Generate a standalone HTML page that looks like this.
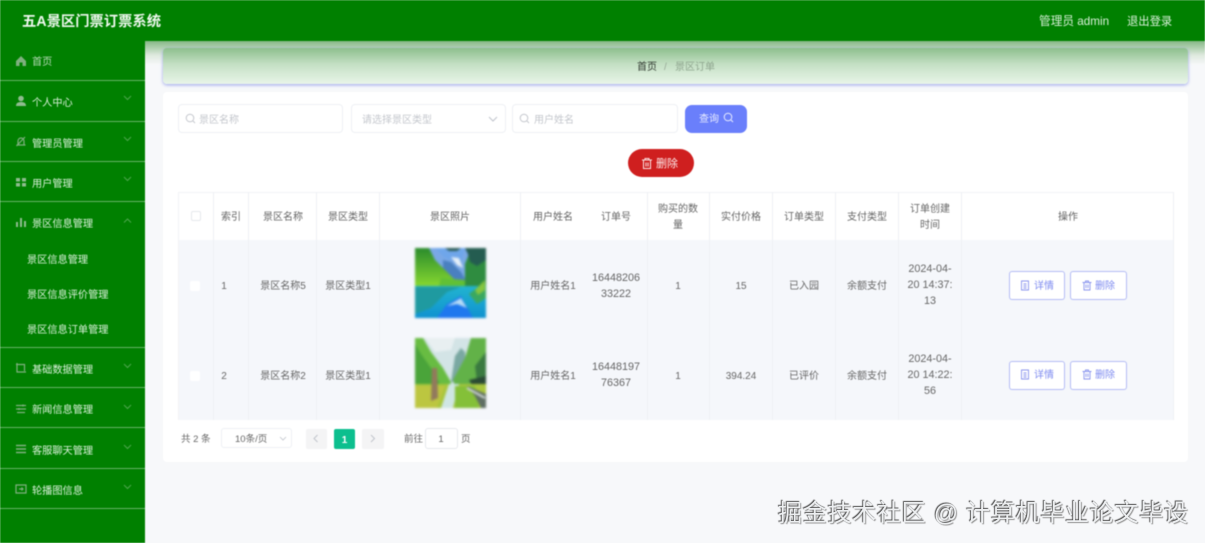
<!DOCTYPE html>
<html lang="zh"><head><meta charset="utf-8"><title>五A景区门票订票系统</title>
<style>
*{box-sizing:border-box;margin:0;padding:0}
html,body{width:1205px;height:543px;overflow:hidden;background:#f7f8fa}
body{font-family:"Liberation Sans","Noto Sans CJK SC",sans-serif;position:relative}
#w{position:absolute;left:0;top:0;width:1205px;height:543px;filter:blur(.45px);overflow:hidden}
.a{position:absolute}
.t{position:absolute;white-space:nowrap;transform:translate(-50%,-50%);text-align:center;font-size:10px;color:#666;line-height:16px;margin-top:6px}
.l{transform:translate(0,-50%);text-align:left}
.n{font-size:10.8px}
.s{color:#d8f0d8;font-size:10.2px}
.ln{position:absolute;left:0;width:145px;height:1px;background:#66b366}
.v{position:absolute;top:192px;height:228px;width:1px;background:#eef0f4}
.ic{position:absolute;fill:none;stroke:#7fb07f;stroke-width:1.2}
.cv{position:absolute;left:123px;fill:none;stroke:#4da64d;stroke-width:1}
.in{position:absolute;background:#fff;border:1px solid #eef0f4;border-radius:4px;height:29px;top:104px}
.ph{color:#c4c7cd;font-size:10px}
.b{position:absolute;width:56px;height:29px;background:#fff;border:1px solid #b4bcf5;border-radius:3px}
</style></head><body><div id="w">
<div class="a" style="left:0;top:0;width:1205px;height:41px;background:#008000"></div>
<div class="a" style="left:0;top:41px;width:145px;height:502px;background:#008000"></div>
<div class="a" style="left:145px;top:41px;width:1060px;height:24px;background:linear-gradient(#86b886,#dfeadf 60%,#f7f8fa)"></div>
<div class="t l" style="left:22px;top:16px;font-size:14.3px;font-weight:700;color:#eef8ee">五A景区门票订票系统</div>
<div class="t l" style="left:1039px;top:16px;font-size:11.7px;color:#d8f0d8">管理员 admin</div>
<div class="t l" style="left:1127px;top:16px;font-size:11.3px;color:#d8f0d8">退出登录</div>

<!-- sidebar -->
<div class="ln" style="top:80px"></div><div class="ln" style="top:121px"></div><div class="ln" style="top:161px"></div><div class="ln" style="top:201px"></div><div class="ln" style="top:347px"></div><div class="ln" style="top:387px"></div><div class="ln" style="top:427px"></div><div class="ln" style="top:468px"></div><div class="ln" style="top:508px"></div>
<div class="t l s" style="left:32px;top:57px;color:#b5d9b5">首页</div>
<div class="t l s" style="left:32px;top:98px">个人中心</div>
<div class="t l s" style="left:32px;top:139px">管理员管理</div>
<div class="t l s" style="left:32px;top:179px">用户管理</div>
<div class="t l s" style="left:32px;top:219px">景区信息管理</div>
<div class="t l s" style="left:27px;top:255px">景区信息管理</div>
<div class="t l s" style="left:27px;top:290px">景区信息评价管理</div>
<div class="t l s" style="left:27px;top:325px">景区信息订单管理</div>
<div class="t l s" style="left:32px;top:365px">基础数据管理</div>
<div class="t l s" style="left:32px;top:405px">新闻信息管理</div>
<div class="t l s" style="left:32px;top:446px">客服聊天管理</div>
<div class="t l s" style="left:32px;top:486px">轮播图信息</div>
<svg class="ic" style="left:15px;top:55px;fill:#7fb07f;stroke:none" width="12" height="12" viewBox="0 0 12 12"><path d="M6 1 1 6v5h3.500V7.500h3V11H11V6z"/></svg>
<svg class="ic" style="left:15px;top:95px;fill:#8fbc8f;stroke:none" width="12" height="12" viewBox="0 0 12 12"><circle cx="6" cy="3.500" r="2.800"/><path d="M1 11c0-3 2-4 5-4s5 1 5 4z"/></svg>
<svg class="ic" style="left:15px;top:135px" width="12" height="12" viewBox="0 0 12 12"><path d="M1.500 10h9M3 10V6a3 3 0 0 1 6 0v4M1.500 11 10 2"/></svg>
<svg class="ic" style="left:15px;top:176px;fill:#8fbc8f;stroke:none" width="12" height="12" viewBox="0 0 12 12"><path d="M1 2h4v3.500H1zM7 2h4v3.500H7zM1 7h4v3.500H1zM7 7h4v3.500H7z"/></svg>
<svg class="ic" style="left:15px;top:216px;fill:#8fbc8f;stroke:none" width="12" height="12" viewBox="0 0 12 12"><path d="M1 6h2v5H1zM5 2h2v9H5zM9 5h2v6H9z"/></svg>
<svg class="ic" style="left:15px;top:362px" width="12" height="12" viewBox="0 0 12 12"><path d="M2 1v9h9M1 2.500h8.500V9"/></svg>
<svg class="ic" style="left:15px;top:403px" width="12" height="12" viewBox="0 0 12 12"><path d="M1 2.500h10M1 6h10M2 9.500h8M8 1.500v2M4 5v2"/></svg>
<svg class="ic" style="left:15px;top:443px;stroke-width:1.400" width="12" height="12" viewBox="0 0 12 12"><path d="M1 2.500h10M1 6h10M1 9.500h10"/></svg>
<svg class="ic" style="left:15px;top:483px" width="12" height="12" viewBox="0 0 12 12"><path d="M1 2h10v8H1zM4 6h4M6.500 4.500 8 6 6.500 7.500"/></svg>
<svg class="cv" style="top:95px" width="9" height="6" viewBox="0 0 9 6"><path d="m1 1 3.500 3.500L8 1"/></svg>
<svg class="cv" style="top:136px" width="9" height="6" viewBox="0 0 9 6"><path d="m1 1 3.500 3.500L8 1"/></svg>
<svg class="cv" style="top:176px" width="9" height="6" viewBox="0 0 9 6"><path d="m1 1 3.500 3.500L8 1"/></svg>
<svg class="cv" style="top:218px" width="9" height="6" viewBox="0 0 9 6"><path d="m1 4.500L4.500 1 8 4.500"/></svg>
<svg class="cv" style="top:363px" width="9" height="6" viewBox="0 0 9 6"><path d="m1 1 3.500 3.500L8 1"/></svg>
<svg class="cv" style="top:404px" width="9" height="6" viewBox="0 0 9 6"><path d="m1 1 3.500 3.500L8 1"/></svg>
<svg class="cv" style="top:444px" width="9" height="6" viewBox="0 0 9 6"><path d="m1 1 3.500 3.500L8 1"/></svg>
<svg class="cv" style="top:484px" width="9" height="6" viewBox="0 0 9 6"><path d="m1 1 3.500 3.500L8 1"/></svg>

<!-- breadcrumb -->
<div class="a" style="left:163px;top:48px;width:1025px;height:36px;border-radius:4px;background:linear-gradient(#8dbf8d,#c4e0c4 45%,#e9f5e9);box-shadow:0 1px 3px #98a1ea"></div>
<div class="t l" style="left:637px;top:60px;color:#303830;font-size:10px;margin-top:8px">首页</div>
<div class="t l" style="left:664px;top:60px;color:#98aa98;font-size:10px;margin-top:8px">/</div>
<div class="t l" style="left:675px;top:60px;color:#8fa68f;font-size:10px;margin-top:8px">景区订单</div>

<!-- card -->
<div class="a" style="left:163px;top:92px;width:1025px;height:370px;background:#fff;border-radius:4px"></div>

<!-- search -->
<div class="in" style="left:178px;width:165px"></div>
<div class="in" style="left:351px;width:155px"></div>
<div class="in" style="left:512px;width:166px"></div>
<svg class="a" style="left:185px;top:113px;fill:none;stroke:#c4c7cd;stroke-width:1" width="11" height="11" viewBox="0 0 11 11"><circle cx="5" cy="5" r="3.800"/><path d="m8 8 2 2"/></svg>
<svg class="a" style="left:519px;top:113px;fill:none;stroke:#c4c7cd;stroke-width:1" width="11" height="11" viewBox="0 0 11 11"><circle cx="5" cy="5" r="3.800"/><path d="m8 8 2 2"/></svg>
<div class="t l ph" style="left:199px;top:115px">景区名称</div>
<div class="t l ph" style="left:362px;top:115px">请选择景区类型</div>
<div class="t l ph" style="left:534px;top:115px">用户姓名</div>
<svg class="a" style="left:488px;top:116px;fill:none;stroke:#c0c4cc;stroke-width:1" width="10" height="6" viewBox="0 0 10 6"><path d="m1 1 4 4 4-4"/></svg>
<div class="a" style="left:685px;top:105px;width:62px;height:28px;background:#6a7ffb;border-radius:7px"></div>
<div class="t l" style="left:699px;top:114px;color:#e8ecff;font-size:10px">查询</div>
<svg class="a" style="left:723px;top:112px;fill:none;stroke:#e8ecff;stroke-width:1" width="11" height="11" viewBox="0 0 11 11"><circle cx="5" cy="5" r="3.800"/><path d="m8 8 2 2"/></svg>

<div class="a" style="left:628px;top:149px;width:66px;height:28px;background:#cf1f1f;border-radius:14px"></div>
<svg class="a" style="left:641px;top:157px;fill:none;stroke:#fbe4e4;stroke-width:1" width="12" height="13" viewBox="0 0 12 13"><path d="M1 3h10M4 3V1.500h4V3M2.500 3v8.500h7V3M5 5.500v4M7 5.500v4"/></svg>
<div class="t l" style="left:656px;top:158px;color:#fdeaea;font-size:11px">删除</div>

<!-- table -->
<div class="a" style="left:178px;top:192px;width:996px;height:228px;background:#f5f7fb;border-top:1px solid #f2f3f6;border-right:1px solid #eef0f4;border-left:1px solid #f2f3f6"></div>
<div class="a" style="left:179px;top:193px;width:994px;height:47px;background:#fff"></div>
<div class="v" style="left:213px"></div><div class="v" style="left:248px"></div><div class="v" style="left:316px"></div><div class="v" style="left:379px"></div><div class="v" style="left:520px"></div><div class="v" style="left:647px"></div><div class="v" style="left:709px"></div><div class="v" style="left:772px"></div><div class="v" style="left:835px"></div><div class="v" style="left:898px"></div><div class="v" style="left:961px"></div>
<div class="a" style="left:191px;top:211px;width:10px;height:10px;background:#fff;border:1px solid #e6e8ec;border-radius:2px"></div>
<div class="a" style="left:190px;top:281px;width:10px;height:10px;background:#fff;border-radius:2px"></div>
<div class="a" style="left:190px;top:371px;width:10px;height:10px;background:#fff;border-radius:2px"></div>

<div class="t" style="left:231px;top:212px">索引</div>
<div class="t" style="left:283px;top:212px">景区名称</div>
<div class="t" style="left:348px;top:212px">景区类型</div>
<div class="t" style="left:450px;top:212px">景区照片</div>
<div class="t" style="left:553px;top:212px">用户姓名</div>
<div class="t" style="left:616px;top:212px">订单号</div>
<div class="t" style="left:678px;top:212px">购买的数<br>量</div>
<div class="t" style="left:741px;top:212px">实付价格</div>
<div class="t" style="left:804px;top:212px">订单类型</div>
<div class="t" style="left:867px;top:212px">支付类型</div>
<div class="t" style="left:930px;top:212px">订单创建<br>时间</div>
<div class="t" style="left:1068px;top:212px">操作</div>

<div class="t" style="left:224px;top:281px">1</div>
<div class="t" style="left:283px;top:281px">景区名称5</div>
<div class="t" style="left:348px;top:281px">景区类型1</div>
<div class="t" style="left:553px;top:281px">用户姓名1</div>
<div class="t n" style="left:616px;top:280px">16448206<br>33222</div>
<div class="t" style="left:678px;top:281px">1</div>
<div class="t" style="left:741px;top:281px">15</div>
<div class="t" style="left:804px;top:281px">已入园</div>
<div class="t" style="left:867px;top:281px">余额支付</div>
<div class="t n" style="left:930px;top:279px">2024-04-<br>20 14:37:<br>13</div>

<div class="t" style="left:224px;top:371px">2</div>
<div class="t" style="left:283px;top:371px">景区名称2</div>
<div class="t" style="left:348px;top:371px">景区类型1</div>
<div class="t" style="left:553px;top:371px">用户姓名1</div>
<div class="t n" style="left:616px;top:369px">16448197<br>76367</div>
<div class="t" style="left:678px;top:371px">1</div>
<div class="t" style="left:741px;top:371px">394.24</div>
<div class="t" style="left:804px;top:371px">已评价</div>
<div class="t" style="left:867px;top:371px">余额支付</div>
<div class="t n" style="left:930px;top:369px">2024-04-<br>20 14:22:<br>56</div>

<!-- photo 1 -->
<svg class="a" style="left:415px;top:248px;filter:blur(1.1px)" width="71" height="70" viewBox="0 0 71 70">
<defs><linearGradient id="g1" x1="0" y1="0" x2="0" y2="1"><stop offset="0" stop-color="#22b4d0"/><stop offset="1" stop-color="#0f92d0"/></linearGradient><linearGradient id="g2" x1="0" y1="0" x2="0" y2="1"><stop offset="0" stop-color="#2a8c2c"/><stop offset="1" stop-color="#86d630"/></linearGradient></defs>
<rect width="71" height="42" fill="#7aa8e6"/>
<path d="M20 0H50L46 14 30 10z" fill="#6fa6ea"/>
<path d="M28 12 36 14 46 24 52 34H28z" fill="#4a80c0"/>
<path d="M36 9 44 10 48 20 42 17z" fill="#e6f0f8"/>
<path d="M0 0H14L20 12 30 22 40 32 46 38H0z" fill="url(#g2)"/>
<path d="M26 30 50 32 56 38H24z" fill="#62c035"/>
<path d="M50 38V16L54 6 71 0V44H58z" fill="#2f8c40"/>
<path d="M50 0H71V12L62 18 55 14 53 6z" fill="#245c50"/>
<path d="M30 0H46L42 3 34 3z" fill="#2a5c58"/>
<rect y="38" width="71" height="32" fill="url(#g1)"/>
<path d="M0 39H46L32 44 16 60 0 66z" fill="#1f9aa0"/>
<path d="M22 70 32 56 46 48 58 70z" fill="#1f78ee"/>
<path d="M32 58 46 50 52 60 42 56z" fill="#b6dcf6"/>
<path d="M54 46 64 38 71 36V50L62 56z" fill="#3aa860"/>
<path d="M60 42 70 32V42L63 47z" fill="#86c640"/>
</svg>
<!-- photo 2 -->
<svg class="a" style="left:415px;top:338px;filter:blur(1.1px)" width="71" height="70" viewBox="0 0 71 70">
<rect width="71" height="70" fill="#d3e4e6"/>
<path d="M10 0H40L36 12 20 14z" fill="#e8eff1"/>
<path d="M36 44 40 18 46 10 50 14 52 44z" fill="#7aa8a2"/>
<path d="M0 0H8L16 14 28 30 36 44V50H0z" fill="#68bc42"/>
<path d="M0 6 6 16 16 30 24 44V50H0z" fill="#4aa43a"/>
<path d="M71 0H56L50 20 38 42 40 48H71z" fill="#62b248"/>
<path d="M60 28 71 14V42L62 44z" fill="#3a7a40"/>
<path d="M54 42 71 38V52H60z" fill="#2a4a34"/>
<rect y="46" width="71" height="24" fill="#a8c63c"/>
<path d="M26 70 34 46H44L38 70z" fill="#cfe6e4"/>
<path d="M0 48H30L22 70H0z" fill="#bcc640"/>
<path d="M40 48H60L64 70H40z" fill="#84c038"/>
<path d="M17 30H22L23 60 16 63z" fill="#927a5c"/>
<path d="M52 48 71 56V70H66L60 58z" fill="#5e6e62"/>
<path d="M52 50 70 60" stroke="#d5dcda" stroke-width="2" fill="none"/>
</svg>

<!-- row buttons -->
<div class="b" style="left:1009px;top:271px"></div><div class="b" style="left:1070px;top:271px;width:57px"></div>
<div class="b" style="left:1009px;top:361px"></div><div class="b" style="left:1070px;top:361px;width:57px"></div>
<svg class="a" style="left:1020px;top:280px;fill:none;stroke:#8a95ee;stroke-width:.9" width="10" height="11" viewBox="0 0 10 11"><path d="M1.500 1h7v9h-7zM3.500 4h3M3.500 6h3M3.500 8h3"/></svg>
<svg class="a" style="left:1020px;top:369px;fill:none;stroke:#8a95ee;stroke-width:.9" width="10" height="11" viewBox="0 0 10 11"><path d="M1.500 1h7v9h-7zM3.500 4h3M3.500 6h3M3.500 8h3"/></svg>
<svg class="a" style="left:1082px;top:280px;fill:none;stroke:#8a95ee;stroke-width:.9" width="10" height="11" viewBox="0 0 10 11"><path d="M.5 2.500h9M3.500 2.500V1h3v1.500M2 2.500V10h6V2.500M4 4.500v3.500M6 4.500v3.500"/></svg>
<svg class="a" style="left:1082px;top:369px;fill:none;stroke:#8a95ee;stroke-width:.9" width="10" height="11" viewBox="0 0 10 11"><path d="M.5 2.500h9M3.500 2.500V1h3v1.500M2 2.500V10h6V2.500M4 4.500v3.500M6 4.500v3.500"/></svg>
<div class="t l" style="left:1034px;top:281px;color:#7f8cf0">详情</div>
<div class="t l" style="left:1095px;top:281px;color:#7f8cf0">删除</div>
<div class="t l" style="left:1034px;top:370px;color:#7f8cf0">详情</div>
<div class="t l" style="left:1095px;top:370px;color:#7f8cf0">删除</div>

<!-- pagination -->
<div class="t l" style="left:181px;top:434px;font-size:9.500px">共 2 条</div>
<div class="a" style="left:221px;top:428px;width:71px;height:20px;background:#fff;border:1px solid #eef0f4;border-radius:3px"></div>
<div class="t l" style="left:235px;top:434px;font-size:9.500px">10条/页</div>
<svg class="a" style="left:279px;top:436px;fill:none;stroke:#c0c4cc;stroke-width:.8" width="8" height="5" viewBox="0 0 8 5"><path d="m1 1 3 3 3-3"/></svg>
<div class="a" style="left:306px;top:429px;width:21px;height:20px;background:#f4f4f5;border-radius:2px"></div>
<svg class="a" style="left:313px;top:434px;fill:none;stroke:#c0c4cc;stroke-width:1" width="6" height="9" viewBox="0 0 6 9"><path d="M4.500 1 1 4.500 4.500 8"/></svg>
<div class="a" style="left:334px;top:429px;width:21px;height:20px;background:#0cbf8e;border-radius:2px"></div>
<div class="t" style="left:344.500px;top:434.500px;color:#fff;font-weight:700;font-size:10px">1</div>
<div class="a" style="left:362px;top:429px;width:22px;height:20px;background:#f4f4f5;border-radius:2px"></div>
<svg class="a" style="left:370px;top:434px;fill:none;stroke:#c0c4cc;stroke-width:1" width="6" height="9" viewBox="0 0 6 9"><path d="M1 1 4.500 4.500 1 8"/></svg>
<div class="t l" style="left:404px;top:434px;font-size:9.500px">前往</div>
<div class="a" style="left:425px;top:428px;width:33px;height:21px;background:#fff;border:1px solid #e6e8ec;border-radius:3px"></div>
<div class="t" style="left:441px;top:434px;font-size:9.500px">1</div>
<div class="t l" style="left:461px;top:434px;font-size:9.500px">页</div>
</div>
<div class="t l" style="left:778px;top:508px;font-size:24px;letter-spacing:.72px;color:#eceef0;text-shadow:-1px -1px 1px #555,1px 1px 1px #999;filter:blur(.3px)">掘金技术社区 @ 计算机毕业论文毕设</div>
</body></html>
